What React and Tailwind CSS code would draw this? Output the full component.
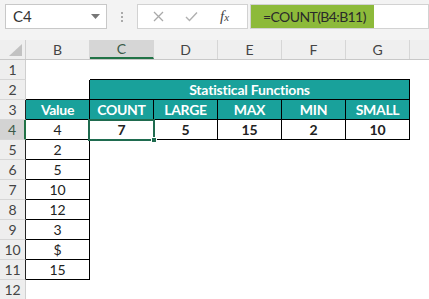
import React from 'react';

const FONT = { fontFamily: 'Lato, "Open Sans", "Liberation Sans", sans-serif' };

const cols = ['B', 'C', 'D', 'E', 'F', 'G'];
const heads = ['COUNT', 'LARGE', 'MAX', 'MIN', 'SMALL'];
const results = ['7', '5', '15', '2', '10'];
const values = ['4', '2', '5', '10', '12', '3', '$', '15'];

function RowHead({ n, active, dark }) {
  return (
    <div
      className={`w-[26px] h-full shrink-0 flex items-center justify-center text-[14px] border-b border-b-[#d6d6d6] border-r ${
        active ? 'bg-[#d3d3d3] text-[#3c5a48] border-r-[#217346] border-r-2' : 'bg-[#eeeeee] text-[#444]'
      } ${!active && dark ? 'border-r-[#222]' : ''} ${!active && !dark ? 'border-r-[#cfcfcf]' : ''}`}
    >
      {n}
    </div>
  );
}

function Cell({ children, className = '' }) {
  return (
    <div className={`w-[64px] h-full shrink-0 box-border flex items-center justify-center text-[14px] ${className}`}>
      {children}
    </div>
  );
}

export default function App() {
  return (
    <div className="w-[429px] h-[299px] overflow-hidden bg-white text-[#222]" style={FONT}>
      {/* formula bar */}
      <div className="h-[40px] bg-[#f3f3f3] flex items-start pt-[4px]">
        <div className="ml-[5px] w-[102px] h-[25px] bg-white border border-[#c8c8c8] flex items-center justify-between pl-[7px] pr-[6px]">
          <span className="text-[15px] text-[#333]">C4</span>
          <svg width="9" height="6" viewBox="0 0 9 6"><polygon points="0,0 9,0 4.5,5" fill="#777" /></svg>
        </div>
        <div className="w-[30px] h-[25px] flex flex-col items-center justify-center gap-[2px]">
          <span className="w-[2px] h-[2px] bg-[#aaa]" />
          <span className="w-[2px] h-[2px] bg-[#aaa]" />
          <span className="w-[2px] h-[2px] bg-[#aaa]" />
        </div>
        <div className="w-[111px] h-[25px] bg-white border border-[#d2d2d2] flex items-center">
          <svg className="ml-[15px]" width="11" height="11" viewBox="0 0 11 11">
            <path d="M1 1 L10 10 M10 1 L1 10" stroke="#a9a9a9" strokeWidth="1.3" />
          </svg>
          <svg className="ml-[21px]" width="13" height="11" viewBox="0 0 13 11">
            <path d="M1 6 L4.5 9.5 L12 1.5" stroke="#b0b0b0" strokeWidth="1.4" fill="none" />
          </svg>
          <span className="ml-[22px] text-[15px] italic text-[#444]" style={{ fontFamily: '"Liberation Serif", serif' }}>
            f<span className="text-[11px]">x</span>
          </span>
        </div>
        <div className="ml-[2px] flex-1 h-[25px] bg-white border border-[#d2d2d2] flex items-stretch">
          <div className="w-[123px] bg-[#8dba3a] flex items-center pl-[12px] text-[14px] tracking-[-0.6px] text-[#2a2a2a] whitespace-nowrap">
            =COUNT(B4:B11)
          </div>
        </div>
      </div>

      {/* column headers */}
      <div className="h-[20px] flex bg-[#efefef] border-b border-[#c8c8c8] text-[14px] text-[#444]">
        <div className="w-[26px] shrink-0 border-r border-[#cfcfcf] flex items-end justify-end pr-[3px] pb-[3px]">
          <svg width="13" height="12" viewBox="0 0 13 12"><polygon points="13,0 13,12 0,12" fill="#c2c2c2" /></svg>
        </div>
        {cols.map((c) => (
          <div
            key={c}
            className={`w-[64px] shrink-0 flex items-center justify-center border-r border-[#d6d6d6] ${
              c === 'C' ? 'bg-[#d6d6d6] text-[#3c5a48] border-b-2 border-b-[#217346]' : ''
            }`}
          >
            {c}
          </div>
        ))}
        <div className="flex-1" />
      </div>

      {/* rows */}
      <div className="relative">
        {/* row 1 */}
        <div className="h-[20px] flex">
          <RowHead n={1} />
          <Cell />
          {heads.map((h) => (
            <Cell key={h} className="border-b border-black" />
          ))}
        </div>
        {/* row 2 */}
        <div className="h-[20px] flex">
          <RowHead n={2} />
          <Cell className="border-b border-r border-black" />
          <div className="w-[320px] h-full shrink-0 bg-[#19a19b] border-r border-b border-black flex items-center justify-center text-[14px] tracking-[-0.2px] font-bold text-white">
            Statistical Functions
          </div>
        </div>
        {/* row 3 */}
        <div className="h-[20px] flex">
          <RowHead n={3} dark />
          <Cell className="bg-[#19a19b] border-r border-b border-black font-bold text-white text-[14px] tracking-[-0.3px]">Value</Cell>
          {heads.map((h) => (
            <Cell key={h} className="bg-[#19a19b] border-r border-b border-black font-bold text-white text-[14px] tracking-[-0.3px]">
              {h}
            </Cell>
          ))}
        </div>
        {/* row 4 */}
        <div className="h-[20px] flex">
          <RowHead n={4} active />
          <Cell className="border-r border-b border-black">{values[0]}</Cell>
          {results.map((r, i) => (
            <Cell key={i} className="border-r border-b border-black font-bold">
              {r}
            </Cell>
          ))}
        </div>
        {values.slice(1).map((v, i) => (
          <div key={i} className="h-[20px] flex">
            <RowHead n={i + 5} dark />
            <Cell className="border-r border-b border-black">{v}</Cell>
          </div>
        ))}
        <div className="h-[20px] flex">
          <RowHead n={12} />
        </div>

        {/* active cell C4 */}
        <div className="absolute left-[88px] top-[59px] w-[67px] h-[22px] border-2 border-[#1f6b4f]" />
        <div className="absolute left-[151px] top-[77px] w-[6px] h-[6px] bg-[#1f6b4f] border border-white" />
      </div>
    </div>
  );
}
